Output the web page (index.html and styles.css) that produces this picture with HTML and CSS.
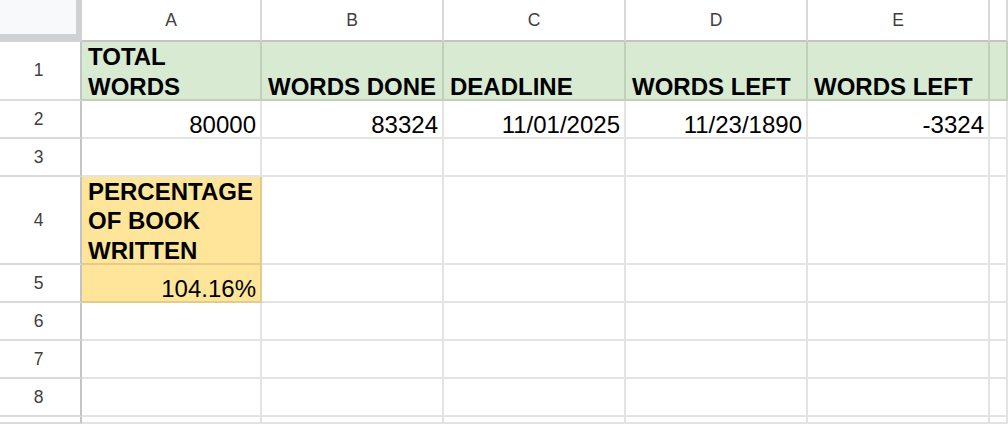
FILE: index.html
```html
<!DOCTYPE html>
<html>
<head>
<meta charset="utf-8">
<link rel="stylesheet" href="styles.css">
</head>
<body>
<div class="sheet">
  <div class="corner"></div>
  <div class="colhead">A</div>
  <div class="colhead">B</div>
  <div class="colhead">C</div>
  <div class="colhead">D</div>
  <div class="colhead">E</div>
  <div class="colhead"></div>

  <div class="rowhead">1</div>
  <div class="cell green bold"><span class="txt">TOTAL WORDS</span></div>
  <div class="cell green bold"><span class="txt">WORDS DONE</span></div>
  <div class="cell green bold"><span class="txt">DEADLINE</span></div>
  <div class="cell green bold"><span class="txt">WORDS LEFT</span></div>
  <div class="cell green bold"><span class="txt">WORDS LEFT</span></div>
  <div class="cell green"></div>

  <div class="rowhead">2</div>
  <div class="cell num"><span class="txt">80000</span></div>
  <div class="cell num"><span class="txt">83324</span></div>
  <div class="cell num"><span class="txt">11/01/2025</span></div>
  <div class="cell num"><span class="txt">11/23/1890</span></div>
  <div class="cell num"><span class="txt">-3324</span></div>
  <div class="cell"></div>

  <div class="rowhead">3</div>
  <div class="cell"></div><div class="cell"></div><div class="cell"></div><div class="cell"></div><div class="cell"></div><div class="cell"></div>

  <div class="rowhead">4</div>
  <div class="cell yellow bold"><span class="txt">PERCENTAGE OF BOOK WRITTEN</span></div>
  <div class="cell"></div><div class="cell"></div><div class="cell"></div><div class="cell"></div><div class="cell"></div>

  <div class="rowhead">5</div>
  <div class="cell yellow num"><span class="txt">104.16%</span></div>
  <div class="cell"></div><div class="cell"></div><div class="cell"></div><div class="cell"></div><div class="cell"></div>

  <div class="rowhead">6</div>
  <div class="cell"></div><div class="cell"></div><div class="cell"></div><div class="cell"></div><div class="cell"></div><div class="cell"></div>

  <div class="rowhead">7</div>
  <div class="cell"></div><div class="cell"></div><div class="cell"></div><div class="cell"></div><div class="cell"></div><div class="cell"></div>

  <div class="rowhead">8</div>
  <div class="cell"></div><div class="cell"></div><div class="cell"></div><div class="cell"></div><div class="cell"></div><div class="cell"></div>

  <div class="rowhead"></div>
  <div class="cell"></div><div class="cell"></div><div class="cell"></div><div class="cell"></div><div class="cell"></div><div class="cell"></div>
</div>
</body>
</html>
```

FILE: styles.css
```css
html, body {
  margin: 0;
  padding: 0;
  background: #ffffff;
  overflow: hidden;
}

.sheet {
  display: grid;
  grid-template-columns: 82px 180px 182px 182px 182px 182px 1fr;
  grid-template-rows: 42px 59px 38px 38px 88px 38px 38px 38px 38px 1fr;
  width: 1008px;
  height: 424px;
  font-family: "Liberation Sans", Arial, sans-serif;
  color: #000000;
}

.sheet > div {
  box-sizing: border-box;
  min-width: 0;
}

.corner {
  background: #f8f9fa;
  border-right: 6px solid #cfd1d3;
  border-bottom: 8px solid #cfd1d3;
}

.colhead {
  display: flex;
  align-items: center;
  justify-content: center;
  font-size: 17.5px;
  color: #404040;
  background: #ffffff;
  border-right: 2px solid #d9d9d9;
  border-bottom: 2px solid #c4c4c4;
  padding-top: 1px;
}

.rowhead {
  display: flex;
  align-items: center;
  justify-content: center;
  font-size: 17.5px;
  color: #404040;
  background: #ffffff;
  border-right: 2px solid #c4c4c4;
  border-bottom: 2px solid #dadada;
  padding-right: 3px;
}

.cell {
  display: flex;
  flex-direction: column;
  justify-content: flex-end;
  font-size: 24px;
  line-height: 29.5px;
  padding: 0 4px 0 6px;
  border-right: 2px solid rgba(0, 0, 0, 0.11);
  border-bottom: 2px solid rgba(0, 0, 0, 0.11);
  overflow: visible;
  white-space: normal;
}

.txt {
  display: block;
  margin-bottom: -2px;
}

.cell.num {
  text-align: right;
}

.cell.bold {
  font-weight: bold;
}

.green {
  background: #d9ead3;
}

.yellow {
  background: #ffe599;
}
```
